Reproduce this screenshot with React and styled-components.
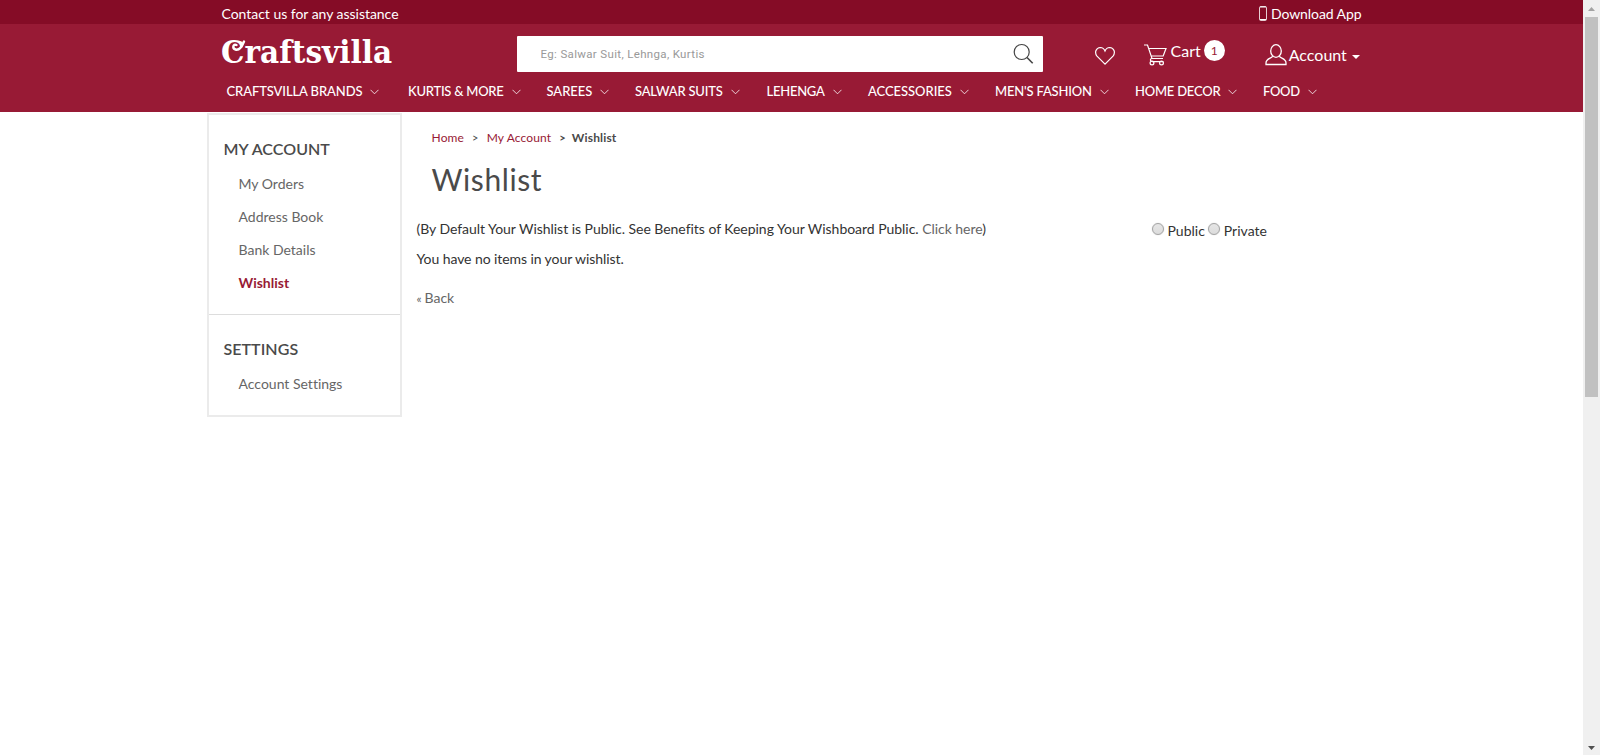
import React from "react";
import styled, { createGlobalStyle } from "styled-components";

const Global = createGlobalStyle`
  * { box-sizing: border-box; }
  body { margin: 0; background: #fff; color: #333; font: 14px/20px Lato, "Liberation Sans", sans-serif; overflow: hidden; }
  a { color: inherit; text-decoration: none; }
  h1, h2, p { margin: 0; padding: 0; font-weight: 400; }
`;

const Screen = styled.div`display: flex; height: 755px;`;
const Page = styled.div`flex: 1; min-width: 0;`;
const Container = styled.div`width: 1170px; margin: 0 auto;`;

const TopBar = styled.div`height: 24px; background: #850c26; color: #fff;`;
const TopRow = styled(Container)`
  display: flex; justify-content: space-between; padding: 4px 15px 0 15px; line-height: 20px; letter-spacing: -0.03px;
`;
const Download = styled.a`
  display: flex; align-items: flex-start; gap: 4px; letter-spacing: -0.08px;
  svg { margin-top: 2px; }
`;
const Header = styled.header`height: 88px; background: #981a35; color: #fff;`;
const Brand = styled(Container)`display: flex; height: 56px; padding: 12px 15px 0;`;
const Logo = styled.a`
  width: 295px; height: 30px;
  svg { display: block; overflow: visible; }
  text { font-family: "DejaVu Serif Condensed", "DejaVu Serif", serif; font-weight: 700; font-size: 32px; fill: #fff; }
`;
const Search = styled.div`
  display: flex; width: 526px; height: 36px; justify-content: space-between;
  padding: 0 9px 0 24px; background: #fff; border-radius: 1px;
  svg { margin-top: 7px; }
`;
const SearchInput = styled.input`
  flex: 1; border: 0; padding: 0; background: none; outline: none;
  font: 11.5px Roboto, sans-serif; letter-spacing: 0.34px;
  &::placeholder { color: #999; opacity: 1; }
`;
const HeartLink = styled.a`margin: 10px 0 0 52px; height: 22px;`;
const Tool = styled.a`
  display: flex; align-items: flex-start; font-size: 16px; line-height: 22px;
  margin-left: ${(p) => p.$left}px; padding-top: ${(p) => p.$top}px;
`;
const CartIcon = styled.svg`margin: 4px 4px 0 0;`;
const UserIcon = styled.svg`margin: 0 2px 0 0;`;
const Count = styled.span`
  width: 21px; height: 21px; margin-left: 3px; border-radius: 50%;
  background: #fff; color: #981a35; font-size: 12px; line-height: 21px; text-align: center;
`;
const Caret = styled.span`
  margin: 11px 0 0 5px; border: 4px solid transparent; border-top-color: #fff; border-bottom: 0;
`;
const Nav = styled(Container)`display: flex; padding-left: 20px;`;
const NavItem = styled.a`
  display: flex; align-items: center; gap: 8px; width: ${(p) => p.$width}px;
  font-size: 13px; font-weight: 500; line-height: 23px; letter-spacing: ${(p) => p.$spacing}px; white-space: nowrap;
  svg { flex: none; }
`;

const Body = styled(Container)`display: flex; align-items: flex-start; padding-top: 1px;`;
const Sidebar = styled.aside`width: 195px; border: 2px solid #ebebeb; font-variant-ligatures: none;`;
const Group = styled.section`
  padding: 22px 14px 15px 15px;
  & + & { border-top: 1px solid #ddd; }
`;
const GroupTitle = styled.h2`
  height: 30px; font-size: 16px; line-height: 24px; font-weight: 600; color: #4a4a4a; letter-spacing: 0.05px;
`;
const SideLink = styled.a`
  display: block; height: 33px; padding: 7px 0 0 15px; line-height: 20px;
  color: ${(p) => (p.$active ? "#981a35" : "#666")};
  font-weight: ${(p) => (p.$active ? 700 : 400)};
`;
const Content = styled.main`flex: 1; padding-left: 15px;`;
const Crumbs = styled.nav`
  display: flex; padding: 16px 0 0 15px; font-size: 12px; line-height: 18px; color: #4a4a4a; letter-spacing: 0.15px;
  a { color: #981a35; }
`;
const Separator = styled.span`margin: 0 ${(p) => p.$after}px 0 8px; font-size: 11px;
  font-weight: ${(p) => (p.$strong ? 700 : 400)};`;
const Title = styled.h1`
  padding: 14px 0 0 15px; font-size: 30px; line-height: 36px; letter-spacing: 0.6px; color: #4a4a4a;
`;
const Privacy = styled.div`display: flex; padding-top: 22px; height: 52px;`;
const Notice = styled.p`width: 735px; white-space: nowrap; letter-spacing: -0.035px; a { color: #666; }`;
const Choices = styled.div`display: flex; align-items: flex-start;`;
const Choice = styled.label`display: flex; padding-top: 2px; margin-right: 3px;`;
const Radio = styled.input`
  appearance: none; width: 12px; height: 12px; margin: 2px 4px 0 0; border: 1px solid #a3a3a3;
  border-radius: 50%; background: linear-gradient(#e6e6e6, #dcdcdc); box-shadow: 0 0 1px #bbb;
`;
const Empty = styled.p`letter-spacing: -0.08px;`;
const Back = styled.a`display: flex; gap: 2px; margin-top: 19px; color: #666; small { width: 6px; font-size: 12px; line-height: 22px; }`;

const Scrollbar = styled.div`
  width: 17px; padding: 0 2px; background: #f0f0f0;
  display: flex; flex-direction: column; justify-content: space-between;
`;
const ScrollTop = styled.div`display: flex; flex-direction: column; height: 397px;`;
const Thumb = styled.div`flex: 1; background: #c1c1c1;`;
const Arrow = styled.svg`display: block; flex: none; width: 13px; height: 17px;`;

const NAV = [
  ["CRAFTSVILLA BRANDS", 181.5, -0.1], ["KURTIS & MORE", 138.5, -0.25], ["SAREES", 88.5, -0.03],
  ["SALWAR SUITS", 131.5, -0.2], ["LEHENGA", 101.5, -0.25], ["ACCESSORIES", 127, -0.05],
  ["MEN'S FASHION", 140, -0.18], ["HOME DECOR", 128, -0.22], ["FOOD", 80, -0.3],
];

export default function App() {
  return (
    <Screen>
      <Global />
      <Page>
        <TopBar>
          <TopRow>
            <a href="#">Contact us for any assistance</a>
            <Download href="#">
              <svg width="8" height="15" viewBox="0 0 8 15" fill="none" stroke="#fff">
                <rect x=".5" y=".5" width="7" height="14" rx="1.2" strokeOpacity=".8" />
                <path d="M1 1h6M1 13.5h6" />
              </svg>
              Download App
            </Download>
          </TopRow>
        </TopBar>
        <Header>
          <Brand>
            <Logo href="#">
              <svg width="172" height="40" viewBox="0 0 172 40">
                <text x="-1" y="27" textLength="171" lengthAdjust="spacingAndGlyphs">Craftsvilla</text>
                <path d="M22 5.500C20 10.500 17 14.500 13.500 13.500C10 12.500 11 7.500 14.500 9" fill="none" stroke="#fff" strokeWidth="2.400" strokeLinecap="round" />
              </svg>
            </Logo>
            <Search>
              <SearchInput placeholder="Eg: Salwar Suit, Lehnga, Kurtis" />
              <svg width="21" height="21" viewBox="0 0 21 21" fill="none" stroke="#444" strokeWidth="1.2">
                <circle cx="8.700" cy="9" r="7.500" />
                <path d="M14 14.500l5.700 5.700" strokeWidth="1.600" />
              </svg>
            </Search>
            <HeartLink href="#">
              <svg width="21" height="20" viewBox="0 0 21 20" fill="none" stroke="#fff" strokeWidth="1.200">
                <path d="M10 18.200L2 10.100C-.8 6.500 1 1.600 5.300 1.500C7.600 1.500 9.200 3 10 5C10.800 3 12.400 1.500 14.700 1.500C19 1.600 20.800 6.500 18 10.100Z" />
              </svg>
            </HeartLink>
            <Tool href="#" $left={28} $top={4}>
              <CartIcon width="23" height="22" viewBox="0 0 23 22" fill="none" stroke="#fff" strokeWidth="1.200">
                <path d="M0 1h3.500L8 14.500h11M4.700 4.500H22L19.200 12H7.100M8 14.500c-2 0-2.500 3 .3 3.100h11" />
                <circle cx="8" cy="19" r="1.900" /><circle cx="17.500" cy="19" r="1.900" />
              </CartIcon>
              Cart
              <Count>1</Count>
            </Tool>
            <Tool href="#" $left={40} $top={8}>
              <UserIcon width="22" height="22" viewBox="0 0 22 22" fill="none" stroke="#fff" strokeWidth="1.300">
                <ellipse cx="11" cy="7" rx="5.300" ry="6.300" />
                <path d="M7.500 12C7.500 14.500 1 14 1 19v1.500h20V19c0-5-6.500-4.500-6.500-7" />
              </UserIcon>
              Account
              <Caret />
            </Tool>
          </Brand>
          <Nav>
            {NAV.map(([name, width, spacing]) => (
              <NavItem key={name} href="#" $width={width} $spacing={spacing}>
                {name}
                <svg width="9" height="6" viewBox="0 0 9 6" fill="none" stroke="#fff" strokeOpacity=".8">
                  <path d="M.5 .8l4 4 4-4" />
                </svg>
              </NavItem>
            ))}
          </Nav>
        </Header>
        <Body>
          <Sidebar>
            <Group>
              <GroupTitle>MY ACCOUNT</GroupTitle>
              <SideLink href="#">My Orders</SideLink>
              <SideLink href="#">Address Book</SideLink>
              <SideLink href="#">Bank Details</SideLink>
              <SideLink href="#" $active>Wishlist</SideLink>
            </Group>
            <Group>
              <GroupTitle>SETTINGS</GroupTitle>
              <SideLink href="#">Account Settings</SideLink>
            </Group>
          </Sidebar>
          <Content>
            <Crumbs>
              <a href="#">Home</a><Separator $after={8}>&gt;</Separator>
              <a href="#">My Account</a><Separator $after={6} $strong>&gt;</Separator>
              <b>Wishlist</b>
            </Crumbs>
            <Title>Wishlist</Title>
            <Privacy>
              <Notice>
                (By Default Your Wishlist is Public. See Benefits of Keeping Your Wishboard Public. <a href="#">Click here</a>)
              </Notice>
              <Choices>
                <Choice><Radio type="radio" name="privacy" />Public</Choice>
                <Choice><Radio type="radio" name="privacy" />Private</Choice>
              </Choices>
            </Privacy>
            <Empty>You have no items in your wishlist.</Empty>
            <Back href="#"><small>«</small>Back</Back>
          </Content>
        </Body>
      </Page>
      <Scrollbar>
        <ScrollTop>
          <Arrow viewBox="0 0 13 17"><path d="M3 11h7L6.500 7z" fill="#a3a3a3" /></Arrow>
          <Thumb />
        </ScrollTop>
        <Arrow viewBox="0 0 13 17"><path d="M3 8h7L6.500 12z" fill="#505050" /></Arrow>
      </Scrollbar>
    </Screen>
  );
}
